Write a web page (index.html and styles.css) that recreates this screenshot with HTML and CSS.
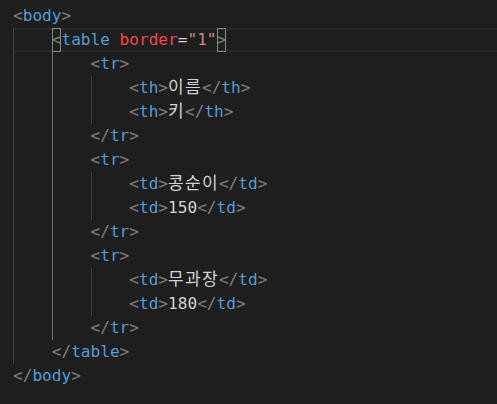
FILE: index.html
```html
<!DOCTYPE html>
<html lang="ko">
<head>
<meta charset="utf-8">
<link rel="stylesheet" href="styles.css">
</head>
<body>
<div class="editor">
  <div class="line"><span class="p">&lt;</span><span class="t">body</span><span class="p">&gt;</span></div>
  <div class="block">
    <div class="line current"><span class="match"><span class="p">&lt;</span></span><span class="t">table</span> <span class="a">border</span><span class="e">=</span><span class="s">"1"</span><span class="match"><span class="p">&gt;</span></span></div>
    <div class="block active">
      <div class="line"><span class="p">&lt;</span><span class="t">tr</span><span class="p">&gt;</span></div>
      <div class="block">
        <div class="line"><span class="p">&lt;</span><span class="t">th</span><span class="p">&gt;</span><span class="ko">이름</span><span class="p">&lt;/</span><span class="t">th</span><span class="p">&gt;</span></div>
        <div class="line"><span class="p">&lt;</span><span class="t">th</span><span class="p">&gt;</span><span class="ko">키</span><span class="p">&lt;/</span><span class="t">th</span><span class="p">&gt;</span></div>
      </div>
      <div class="line"><span class="p">&lt;/</span><span class="t">tr</span><span class="p">&gt;</span></div>
      <div class="line"><span class="p">&lt;</span><span class="t">tr</span><span class="p">&gt;</span></div>
      <div class="block">
        <div class="line"><span class="p">&lt;</span><span class="t">td</span><span class="p">&gt;</span><span class="ko">콩순이</span><span class="p">&lt;/</span><span class="t">td</span><span class="p">&gt;</span></div>
        <div class="line"><span class="p">&lt;</span><span class="t">td</span><span class="p">&gt;</span><span class="x">150</span><span class="p">&lt;/</span><span class="t">td</span><span class="p">&gt;</span></div>
      </div>
      <div class="line"><span class="p">&lt;/</span><span class="t">tr</span><span class="p">&gt;</span></div>
      <div class="line"><span class="p">&lt;</span><span class="t">tr</span><span class="p">&gt;</span></div>
      <div class="block">
        <div class="line"><span class="p">&lt;</span><span class="t">td</span><span class="p">&gt;</span><span class="ko">무과장</span><span class="p">&lt;/</span><span class="t">td</span><span class="p">&gt;</span></div>
        <div class="line"><span class="p">&lt;</span><span class="t">td</span><span class="p">&gt;</span><span class="x">180</span><span class="p">&lt;/</span><span class="t">td</span><span class="p">&gt;</span></div>
      </div>
      <div class="line"><span class="p">&lt;/</span><span class="t">tr</span><span class="p">&gt;</span></div>
    </div>
    <div class="line"><span class="p">&lt;/</span><span class="t">table</span><span class="p">&gt;</span></div>
  </div>
  <div class="line"><span class="p">&lt;/</span><span class="t">body</span><span class="p">&gt;</span></div>
</div>
</body>
</html>
```

FILE: styles.css
```css
html, body {
  margin: 0;
  padding: 0;
  background: #1e1e1e;
  height: 100%;
  overflow: hidden;
}

.editor {
  padding: 4px 0 0 13px;
  font-family: "DejaVu Sans Mono", "Noto Sans CJK KR", monospace;
  font-size: 16.1px;
  color: #d4d4d4;
}

.line {
  height: 24px;
  line-height: 24px;
  white-space: pre;
}

.block {
  border-left: 1px solid #404040;
  padding-left: calc(4ch - 1px);
}

.block.active {
  border-left-color: #707070;
}

.current {
  margin-left: calc(-4ch + 1px);
  padding-left: calc(4ch - 1px);
  box-sizing: border-box;
  border-top: 2px solid #282828;
  border-bottom: 2px solid #282828;
  line-height: 20px;
}

.match {
  display: inline-block;
  height: 24px;
  margin-top: -2px;
  vertical-align: top;
  line-height: 24px;
  box-sizing: border-box;
  outline: 1px solid #888888;
  outline-offset: -1px;
  background: rgba(0, 100, 0, 0.1);
}

.p { color: #808080; }
.t { color: #569cd6; }
.a { color: #f44747; }
.e { color: #d4d4d4; }
.s { color: #ce9178; }
.x { color: #d4d4d4; }

.ko {
  font-family: "Noto Sans CJK KR", sans-serif;
  font-size: 17px;
  line-height: 16px;
  letter-spacing: 1.3px;
}
```
